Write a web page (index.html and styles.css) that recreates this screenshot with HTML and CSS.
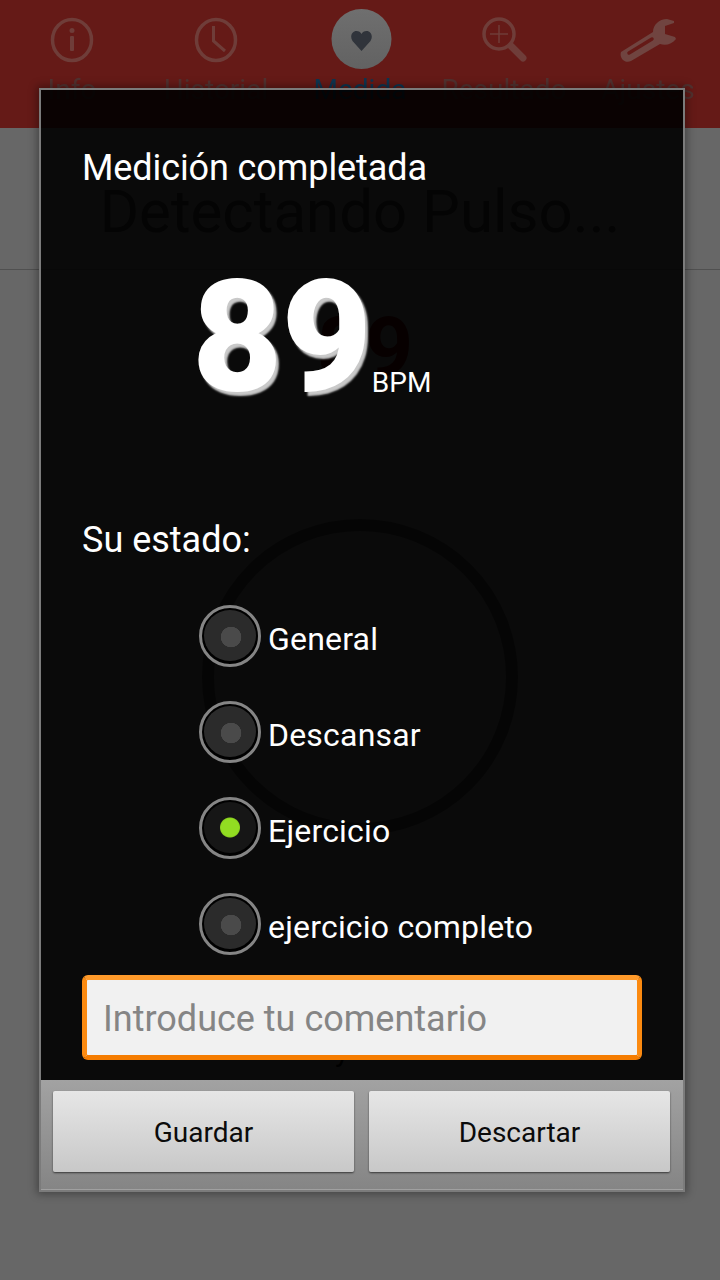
FILE: index.html
```html
<!DOCTYPE html>
<html lang="es">
<head>
<meta charset="utf-8">
<title>Medición completada</title>
<link rel="stylesheet" href="styles.css">
</head>
<body>
<div class="page">
  <nav class="tabs">
    <div class="tab">
      <svg class="icon" viewBox="0 0 48 48"><ellipse cx="24" cy="24" rx="19.500" ry="20.500" fill="none" stroke="#6f3d39" stroke-width="3.500"/><circle cx="24" cy="14.500" r="2.500" fill="#6f3d39"/><rect x="22" y="20" width="4" height="15" rx="1" fill="#6f3d39"/></svg>
      <span class="tab-label">Info</span>
    </div>
    <div class="tab">
      <svg class="icon" viewBox="0 0 48 48"><ellipse cx="24" cy="24" rx="19.500" ry="20.500" fill="none" stroke="#6f3d39" stroke-width="3.500"/><path d="M21.500 10 V25 L33 35" fill="none" stroke="#6f3d39" stroke-width="3"/></svg>
      <span class="tab-label">Historial</span>
    </div>
    <div class="tab">
      <div class="heart-button">
        <svg class="heart" viewBox="0 0 24 24"><path d="M12 22 L3 12 C0 7.500 2.500 2 7 2 C9.300 2 11 3.200 12 5 C13 3.200 14.700 2 17 2 C21.500 2 24 7.500 21 12 Z" fill="#30343b"/></svg>
      </div>
      <span class="tab-label active">Medida</span>
    </div>
    <div class="tab">
      <svg class="icon" viewBox="0 0 48 48"><circle cx="19" cy="18" r="15" fill="none" stroke="#6f3d39" stroke-width="3.500"/><path d="M19 9 V27 M10 18 H28" stroke="#6f3d39" stroke-width="1.500"/><path d="M31 30 L43 42" stroke="#6f3d39" stroke-width="7" stroke-linecap="round"/></svg>
      <span class="tab-label">Resultado</span>
    </div>
    <div class="tab">
      <svg class="icon wrench" viewBox="0 0 64 48"><path d="M5 36 L37 16 C37 9 43 3 51 3 L58 5 L58 7 L49 10 L49 18 L59 21 L60 23 C56 28 50 30 44 28 L15 45 C9 48 3 42 5 36 Z" fill="#704440"/><path d="M13 37 L36 23" stroke="#651a17" stroke-width="3.500" stroke-linecap="round"/></svg>
      <span class="tab-label">Ajustes</span>
    </div>
  </nav>
  <h1 class="status">Detectando Pulso...</h1>
  <main class="monitor">
    <div class="live-rate">89</div>
    <div class="ring"></div>
    <p class="hint">y</p>
  </main>
</div>

<div class="dialog">
  <div class="dialog-body">
    <h2 class="dialog-title">Medición completada</h2>
    <div class="result"><span class="value">89</span><span class="unit">BPM</span></div>
    <p class="state-label">Su estado:</p>
    <div class="options">
      <div class="option"><span class="radio"><span class="dot"></span></span><span class="option-text">General</span></div>
      <div class="option"><span class="radio"><span class="dot"></span></span><span class="option-text">Descansar</span></div>
      <div class="option"><span class="radio"><span class="dot on"></span></span><span class="option-text">Ejercicio</span></div>
      <div class="option"><span class="radio"><span class="dot"></span></span><span class="option-text">ejercicio completo</span></div>
    </div>
    <input class="comment" type="text" placeholder="Introduce tu comentario">
  </div>
  <div class="dialog-actions">
    <button class="action">Guardar</button>
    <button class="action">Descartar</button>
  </div>
</div>
</body>
</html>
```

FILE: styles.css
```css
* { box-sizing: border-box; }
html, body { margin: 0; height: 100%; }
body {
  width: 720px;
  height: 1280px;
  overflow: hidden;
  background: #676767;
  font-family: Roboto, "Liberation Sans", sans-serif;
  position: relative;
}
.page { height: 1280px; display: flex; flex-direction: column; }
.tabs {
  height: 128px;
  background: #651a17;
  display: flex;
}
.tab {
  width: 144px;
  height: 128px;
  display: flex;
  flex-direction: column;
  align-items: center;
  padding-top: 8px;
  overflow: visible;
}
.icon { width: 64px; height: 64px; padding: 8px; display: block; filter: blur(.5px); }
.icon.wrench { padding: 0; }
.heart-button {
  width: 60px;
  height: 60px;
  border-radius: 50%;
  margin-top: 1px;
  margin-bottom: 3px;
  background: linear-gradient(#6f6f6f, #626262);
  display: flex;
  align-items: center;
  justify-content: center;
  transform: translateX(1.500px);
}
.heart { width: 24px; height: 24px; margin-top: 3px; filter: blur(.4px); }
.tab-label {
  font-size: 28px;
  line-height: 36px;
  color: #51312f;
  white-space: nowrap;
  filter: blur(.4px);
}
.tab-label.active { color: #0e3550; }
.status {
  margin: 0;
  height: 142px;
  border-bottom: 1px solid #505050;
  font-size: 60px;
  font-weight: 400;
  line-height: 70px;
  padding-top: 49px;
  text-align: center;
  color: #2a2a2a;
  white-space: nowrap;
}
.monitor {
  flex: 1;
  display: flex;
  flex-direction: column;
  align-items: center;
  color: #2a2a2a;
}
.live-rate {
  font-size: 84px;
  font-weight: 700;
  line-height: 90px;
  margin-top: 33px;
  margin-left: 10px;
  color: #450000;
}
.ring {
  width: 316px;
  height: 316px;
  border: 12px solid #383838;
  border-radius: 50%;
  margin-top: 126px;
}
.hint { margin: 198px 36px 0 0; font-size: 30px; color: #000; }

.dialog {
  position: absolute;
  left: 39px;
  top: 88px;
  width: 646px;
  height: 1104px;
  border: 2px solid #7b7b7b;
  display: flex;
  flex-direction: column;
  box-shadow: 0 0 8px 2px rgba(0, 0, 0, .35);
  color: #fff;
}
.dialog-body {
  flex: 1;
  background: rgba(0, 0, 0, .9);
  display: flex;
  flex-direction: column;
  padding: 0 41px 20px;
}
.dialog-title {
  margin: 0;
  font-size: 36px;
  font-weight: 400;
  letter-spacing: -.1px;
  line-height: 40px;
  padding-top: 58px;
  height: 98px;
  white-space: nowrap;
}
.result {
  height: 332px;
  padding-left: 110px;
  display: flex;
  align-items: flex-end;
}
.value {
  font-size: 156px;
  font-weight: 900;
  letter-spacing: -1px;
  line-height: 160px;
  margin-bottom: 103px;
  text-shadow: 3px 4px 2px #c9c9c9;
}
.unit {
  font-size: 28px;
  line-height: 32px;
  margin-bottom: 121px;
  margin-left: 1px;
}
.state-label {
  margin: 0;
  font-size: 36px;
  line-height: 40px;
  height: 50px;
}
.options {
  display: flex;
  flex-direction: column;
  gap: 34px;
  padding-left: 117px;
  padding-top: 35px;
}
.option {
  height: 62px;
  display: flex;
  align-items: center;
  gap: 7px;
  font-size: 32px;
  letter-spacing: .2px;
  white-space: nowrap;
}
.option-text { margin-top: 5px; }
.radio {
  width: 62px;
  height: 62px;
  border-radius: 50%;
  border: 3px solid #858585;
  background: #000;
  padding: 2px 2px 3px;
  display: flex;
  flex: none;
}
.radio .dot {
  flex: 1;
  border-radius: 50%;
  background: radial-gradient(circle at 52% 53%, #4a4a4a 0 10px, #2b2b2b 10.500px 100%);
}
.radio .dot.on {
  background: radial-gradient(circle at 50% 50%, #92dd22 0 8.500px, #8ad11e 9.500px, transparent 10.500px), #161616;
}
.comment {
  margin-top: 20px;
  width: 560px;
  height: 85px;
  flex: none;
  border: 5px solid #fb8a11;
  border-top-color: #ff9a2a;
  border-bottom-color: #f57c00;
  border-radius: 6px;
  background: #f1f1f1;
  font-family: inherit;
  font-size: 36px;
  padding: 2px 16px 0;
  outline: none;
}
.comment::placeholder { color: #858585; opacity: 1; }
.dialog-actions {
  height: 110px;
  flex: none;
  display: flex;
  gap: 15px;
  padding: 11px 13px 17px 12px;
  background: linear-gradient(#a2a2a2, #858585);
  border-bottom: 1px solid #a0a0a0;
}
.action {
  flex: 1;
  border: 0;
  border-radius: 2px;
  background: linear-gradient(#e6e6e6, #c8c8c8);
  box-shadow: 0 1px 2px rgba(0, 0, 0, .6);
  font-family: inherit;
  font-size: 28px;
  padding: 2px 0 0;
  color: #0b0b0b;
}
```
